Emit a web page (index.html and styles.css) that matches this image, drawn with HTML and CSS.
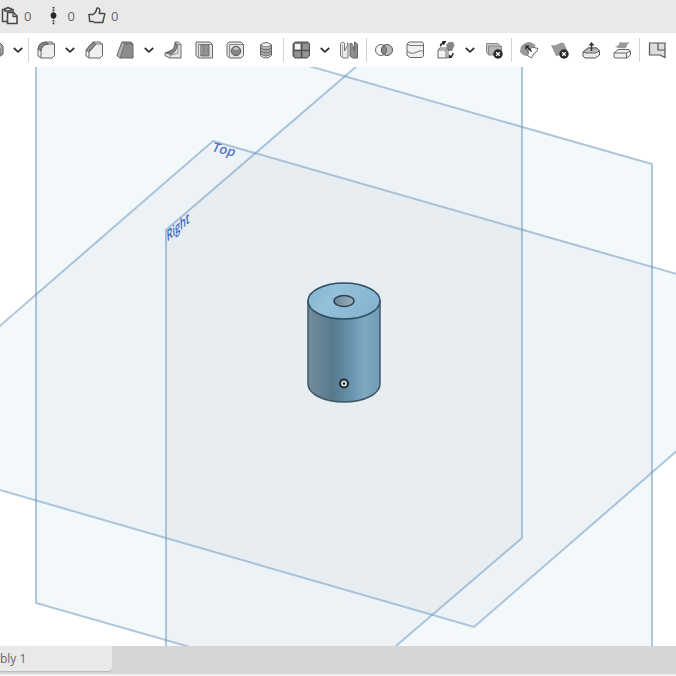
FILE: index.html
```html
<!DOCTYPE html>
<html lang="en">
<head>
<meta charset="utf-8">
<meta name="viewport" content="width=device-width, initial-scale=1">
<title>Part Studio</title>
<link rel="stylesheet" href="styles.css">
</head>
<body>
<svg class="defs" aria-hidden="true">
  <symbol id="chev" viewBox="0 0 10 8"><path d="M.8 2L5 5.800 9.200 2" fill="none" stroke="#303030" stroke-width="1.700"/></symbol>
  <symbol id="remove" viewBox="0 0 10 10"><circle cx="5" cy="5" r="4.700" fill="#292929"/><path d="M3.200 3.200l3.600 3.600M6.800 3.200L3.200 6.800" stroke="#fff" stroke-width="1.300"/></symbol>
</svg>
<header class="stats">
  <span class="stat"><svg class="icon" viewBox="0 0 20 20" role="img" aria-label="Copies"><path d="M7 15.500H2.500v-12H5M11 3.500h2V7M5 5V2.500h1.700a1.400 1.400 0 0 1 2.600 0H11V5z" fill="none" stroke="#4a4a4a" stroke-width="1.500"/><path d="M7.500 6.500h6L17 10v7.500H7.500z" fill="#ededed" stroke="#4a4a4a" stroke-width="1.600"/><path d="M13 6.500V10.500h4" fill="none" stroke="#4a4a4a" stroke-width="1.300"/></svg>0</span>
  <span class="stat"><svg class="icon" viewBox="0 0 20 20" role="img" aria-label="Versions"><path d="M10.500 1v17.500" stroke="#333" stroke-width="1.800" stroke-dasharray="1.600 1"/><circle cx="10.500" cy="9.500" r="2.900" fill="#292929"/></svg>0</span>
  <span class="stat"><svg class="icon" viewBox="0 0 20 20" role="img" aria-label="Likes"><path d="M2 8.500h4.300c2-1.500 3.400-3.400 3.500-6.200 1.900-.7 3.100.5 3 2.300l-.6 2.900h4.800c.9 0 1 1.200.5 1.700l-1.800 7.300H7.500l-1.400-1H2.700z" fill="none" stroke="#4a4a4a" stroke-width="1.500" stroke-linejoin="round"/></svg>0</span>
</header>
<nav class="toolbar" aria-label="Features">
  <button class="tool tool-cut" aria-label="Thicken"><svg class="icon" viewBox="0 0 20 20"><path d="M9 5l7-2 3 3v8l-4 3H8z" fill="#aaa" stroke="#555"/><path d="M9 8h7v8" fill="#ddd" stroke="#666"/></svg></button>
  <button class="more" aria-label="More solids"><svg><use href="#chev"/></svg></button>
  <i class="rule"></i>
  <button class="tool" aria-label="Fillet"><svg class="icon" viewBox="0 0 20 20"><path d="M2 9q1-7 9-7h5l2.500 2v11.500L16 18H5l-3-2z" fill="#eee" stroke="#666"/><path d="M2 9q1-7 8-7l2.500 2Q6 4 5 11z" fill="#888" stroke="#555" stroke-width=".8"/><path d="M5 18v-7q0-7 8-7h5.500" fill="none" stroke="#666"/></svg></button>
  <button class="more" aria-label="More fillets"><svg><use href="#chev"/></svg></button>
  <button class="tool" aria-label="Chamfer"><svg class="icon" viewBox="0 0 20 20"><path d="M2 10l7-8h7l2.500 2v11.500L16 18H5l-3-2z" fill="#eee" stroke="#666"/><path d="M2 10l7-8 3 2-7 8z" fill="#909090" stroke="#555" stroke-width=".8"/><path d="M5 18v-6l7-8h6.500" fill="none" stroke="#666"/></svg></button>
  <button class="tool" aria-label="Draft"><svg class="icon" viewBox="0 0 20 20"><path d="M7 2h9l2 2v14H5l-3-2.500z" fill="#8c8c8c" stroke="#666"/><path d="M7 2L2 15.500 5 18 9.500 4z" fill="#b5b5b5" stroke="#666" stroke-width=".8"/><path d="M9.500 4H18" stroke="#666" stroke-width=".8"/></svg></button>
  <button class="more" aria-label="More drafts"><svg><use href="#chev"/></svg></button>
  <button class="tool" aria-label="Rib"><svg class="icon" viewBox="0 0 20 20"><path d="M12 2h3.500l2.500 2.500V18H6.500L2 15.500V13l10-4z" fill="#e6e6e6" stroke="#666"/><path d="M12.500 3l2 2q-1 7-7 9.500L3 13q8-2 9.500-10z" fill="#858585" stroke="#555" stroke-width=".8"/><path d="M12 2l3 2.500V13l-8 2.500V18M15 4.500h3" fill="none" stroke="#777" stroke-width=".8"/></svg></button>
  <button class="tool" aria-label="Shell"><svg class="icon" viewBox="0 0 20 20"><path d="M2 2h14l2.500 2.500V18H4.500L2 15.500z" fill="#e3e3e3" stroke="#666"/><path d="M7 4.500h8V16H7z" fill="#919191" stroke="#666" stroke-width=".8"/><path d="M7 4.500l2 1.500v7.500L7 16z" fill="#bbb" stroke="#666" stroke-width=".8"/><path d="M4.500 18V4.500H18" fill="none" stroke="#777" stroke-width=".8"/></svg></button>
  <button class="tool" aria-label="Hole"><svg class="icon" viewBox="0 0 20 20"><path d="M2 4l2-2h12l2.500 2.500v11L16 18H4.500L2 15.500z" fill="#e7e7e7" stroke="#666"/><path d="M4.500 18V4.500h14" fill="none" stroke="#888"/><circle cx="11" cy="11" r="4.700" fill="#858585" stroke="#555"/><path d="M8 9q3-4 6 0-3 2-6 0" fill="#c5c5c5"/></svg></button>
  <button class="tool" aria-label="Thread"><svg class="icon" viewBox="0 0 20 20"><path d="M4.500 5v10.500q5.500 5 11 0V5q-5.500-5-11 0z" fill="#eee" stroke="#666"/><path d="M5 6q5 4 10 0v8q-5 4-10 0z" fill="#aaa"/><path d="M4.500 5q5.500 4 11 0M5 8q5 4 10 0M5 11q5 4 10 0M5 14q5 4 10 0" fill="none" stroke="#666"/></svg></button>
  <i class="rule"></i>
  <button class="tool" aria-label="Pattern"><svg class="icon" viewBox="0 0 20 20"><path d="M2 4l2-2h13l1.500 2v12L16 18H4l-2-2z" fill="#777" stroke="#555"/><path d="M4 4h5.500v5.500H4z" fill="#f3f3f3"/><path d="M12 4h5.500v5.500H12zM4 11.500h5.500V17H4zM12 11.500h5.500V17H12z" fill="#939393"/><path d="M10.500 2v16M2 10.500h16.500" stroke="#4d4d4d"/></svg></button>
  <button class="more" aria-label="More patterns"><svg><use href="#chev"/></svg></button>
  <button class="tool" aria-label="Mirror"><svg class="icon" viewBox="0 0 20 20"><path d="M1.500 4l2-2 2 1v8l3-6V3H9v15H4l-2.500-2z" fill="#ececec" stroke="#777"/><path d="M11 3.500h2l2.500 7V2l3 2v14h-5L11 16z" fill="#8c8c8c" stroke="#666"/><path d="M3.500 5v13M13 4v14" fill="none" stroke="#999" stroke-width=".8"/></svg></button>
  <i class="rule"></i>
  <button class="tool" aria-label="Boolean"><svg class="icon" viewBox="0 0 20 20"><circle cx="7" cy="10" r="5.500" fill="#f4f4f4" stroke="#666"/><circle cx="13" cy="10" r="5.500" fill="#bbb" stroke="#555"/><path d="M10 5.400a5.500 5.500 0 0 1 0 9.200 5.500 5.500 0 0 1 0-9.200z" fill="#888" stroke="#555"/></svg></button>
  <button class="tool" aria-label="Split"><svg class="icon" viewBox="0 0 20 20"><path d="M2 4l2-2h13l1.500 2v12L17 17.500H5L2 15z" fill="#f0f0f0" stroke="#666"/><path d="M2 4l3 1.500h13M2 11l3 2q4 1 7-1t6.500-1" fill="none" stroke="#777"/></svg></button>
  <button class="tool" aria-label="Transform"><svg class="icon" viewBox="0 0 20 20"><path d="M10 5l3-3h4l1.500 3-2.500 6h-4z" fill="#858585"/><path d="M2 10l2-2h7l1 1v8l-1 1H2z" fill="#f2f2f2" stroke="#666"/><path d="M2 10h8v8M10 10l2-2" fill="none" stroke="#777"/><path d="M4.500 6.500q0-3 3-3.500M17 13q0 3-3 4" fill="none" stroke="#333" stroke-width="1.500"/><path d="M6 1h4.500L7.500 5.500zM12.500 18.500l.5-4 3.500 3z" fill="#222"/></svg></button>
  <button class="more" aria-label="More transforms"><svg><use href="#chev"/></svg></button>
  <button class="tool" aria-label="Delete part"><svg class="icon" viewBox="0 0 20 20"><path d="M2.500 3.500h11.500l2 2V14H4l-1.500-1.500z" fill="#c8c8c8" stroke="#888"/><path d="M4.500 6h13v9h-13z" fill="#b5b5b5" stroke="#888"/><use href="#remove" x="9" y="9" width="10" height="10"/></svg></button>
  <i class="rule"></i>
  <button class="tool" aria-label="Modify fillet"><svg class="icon" viewBox="0 0 20 20"><path d="M1 12Q1 4 9 2q5 0 8 4l-4 2-5 8q-4 0-7-4z" fill="#999"/><path d="M8.500 10q3 1 4.500-3l6 1.500q-1 4-4 5l-2.500 4.500-4-2.500q2-2 0-5.500z" fill="#fff" stroke="#666"/><path d="M7.500 6l5 5.500M7 9.500V6h3.500" fill="none" stroke="#222" stroke-width="1.200"/></svg></button>
  <button class="tool" aria-label="Delete face"><svg class="icon" viewBox="0 0 20 20"><path d="M1 5q4 1 7-1t6-1l3 7-5 5-6 1z" fill="#9a9a9a"/><use href="#remove" x="9" y="9" width="10" height="10"/></svg></button>
  <button class="tool" aria-label="Move face"><svg class="icon" viewBox="0 0 20 20"><path d="M2 12l5-4h9l2.500 3v4l-4 3H4l-2-2z" fill="#e8e8e8" stroke="#555"/><path d="M2 12l5-4h9l2.500 3-4 2H5z" fill="#bbb" stroke="#666"/><path d="M10.500 11V4" stroke="#333" stroke-width="1.500"/><path d="M7.500 5.500h6L10.500 2z" fill="#333"/></svg></button>
  <button class="tool" aria-label="Replace face"><svg class="icon" viewBox="0 0 20 20"><path d="M3 7q4-1 5-5 5 1 10 0-3 2-4 6-6 1-11-1z" fill="#999"/><path d="M2 13l4-3.500h11l1.500 2v3.500L15 18H3l-1-1z" fill="#f0f0f0" stroke="#666"/><path d="M2 13h12.500v5M14.500 13l4-2" fill="none" stroke="#666"/></svg></button>
  <i class="rule"></i>
  <button class="tool" aria-label="Sheet metal"><svg class="icon" viewBox="0 0 20 20"><path d="M2.500 3h15.500v14.500l-5-2.500H2.500z" fill="#ddd" stroke="#555" stroke-width="1.200"/><path d="M11 3v7h7" fill="none" stroke="#555" stroke-width="1.200"/></svg></button>
</nav>
<main class="viewport">
  <svg class="scene" viewBox="0 67 676 579" preserveAspectRatio="xMidYMid slice" role="img" aria-label="Cylinder with reference planes">
    <defs>
      <clipPath id="clip-front"><path d="M36-12L652 164V779L36 603z"/></clipPath>
      <clipPath id="clip-right"><path d="M166 230L522-76V538L166 843z"/></clipPath>
      <linearGradient id="side"><stop offset="0" stop-color="#718c9c"/><stop offset=".25" stop-color="#617f91"/><stop offset=".34" stop-color="#56798d"/><stop offset=".6" stop-color="#6794af"/><stop offset=".78" stop-color="#7fa8c1"/><stop offset="1" stop-color="#709bb5"/></linearGradient>
      <linearGradient id="cap" x2="1" y2=".4"><stop offset="0" stop-color="#81b1cc"/><stop offset=".4" stop-color="#94c1da"/><stop offset="1" stop-color="#87b5d1"/></linearGradient>
      <linearGradient id="bore"><stop offset="0" stop-color="#6c8796"/><stop offset="1" stop-color="#9ab2c0"/></linearGradient>
    </defs>
    <g fill="#f3f8fb">
      <path d="M36-12L652 164V779L36 603z"/>
      <path d="M166 230L522-76V538L166 843z"/>
      <path d="M213 141L830 318 474 627-142 449z"/>
    </g>
    <g fill="#edf2f6">
      <path clip-path="url(#clip-front)" d="M166 230L522-76V538L166 843z"/>
      <path clip-path="url(#clip-front)" d="M213 141L830 318 474 627-142 449z"/>
      <path clip-path="url(#clip-right)" d="M213 141L830 318 474 627-142 449z"/>
    </g>
    <g clip-path="url(#clip-front)"><path clip-path="url(#clip-right)" d="M213 141L830 318 474 627-142 449z" fill="#e8edf2"/></g>
    <g class="edges">
      <path d="M36-12L652 164V779L36 603z"/>
      <path d="M166 230L522-76V538L166 843z"/>
      <path d="M213 141L830 318 474 627-142 449z"/>
    </g>
    <text class="plane-name" transform="translate(211 151) rotate(14) skewX(-10)">Top</text>
    <text class="plane-name plane-side" transform="translate(167 242) rotate(-41) skewX(-38)">Right</text>
    <path d="M308 301v83a36 18 0 0 0 72 0v-83z" fill="url(#side)" stroke="#3f5969" stroke-width="1.500"/>
    <ellipse cx="344" cy="301" rx="36" ry="18" fill="url(#cap)" stroke="#2f4f62" stroke-width="1.500"/>
    <ellipse cx="344" cy="301" rx="10" ry="5.500" fill="url(#bore)" stroke="#2d4350" stroke-width="1.500"/>
    <circle cx="344" cy="383.500" r="4" fill="#dce0e2" stroke="#20282d" stroke-width="2"/>
    <circle cx="344" cy="383.500" r="1.300" fill="#20282d"/>
  </svg>
</main>
<footer class="tabs"><button class="tab">bly 1</button></footer>
</body>
</html>
```
FILE: styles.css
```css
* { box-sizing: border-box; }
body {
  margin: 0;
  height: 100vh;
  display: flex;
  flex-direction: column;
  overflow: hidden;
  background: #fff;
  font-family: "Open Sans", "Noto Sans", sans-serif;
}
button { border: 0; padding: 0; background: none; font: inherit; }
.defs { position: absolute; width: 0; height: 0; }
.icon { display: block; flex: none; width: 20px; height: 20px; }
.stats {
  flex: none;
  display: flex;
  gap: 12px;
  height: 33px;
  padding-bottom: 2px;
  background: #e9e9e9;
}
.stat {
  display: flex;
  align-items: center;
  gap: 4px;
  color: #666;
  font-size: 13px;
  line-height: 20px;
}
.toolbar {
  flex: none;
  display: flex;
  align-items: center;
  height: 34px;
  overflow: hidden;
  background: #fff;
}
.tool { flex: none; display: flex; justify-content: center; width: 31px; }
.tool-cut { margin-left: -22px; }
.more { flex: none; display: flex; justify-content: center; width: 17px; }
.more svg { width: 10px; height: 8px; }
.rule {
  flex: none;
  width: 4px;
  height: 24px;
  background: linear-gradient(#d2d2d2, #d2d2d2) center / 1px 100% no-repeat;
}
.viewport { flex: 1; min-height: 0; }
.scene { display: block; width: 100%; height: 100%; }
.edges { fill: none; stroke: #6592bb; stroke-opacity: .5; stroke-width: 2; }
.plane-name { fill: #5272bb; font-size: 13px; font-weight: 600; }
.plane-side { fill: #4568b8; font-size: 12px; }
.tabs {
  flex: none;
  display: flex;
  height: 30px;
  padding-bottom: 2px;
  background: linear-gradient(#d6d6d6, #d6d6d6) top / 100% 28px no-repeat #f0f0f0;
}
.tab {
  width: 112px;
  height: 25px;
  border-radius: 0 0 4px 0;
  background: #e9e9e9;
  box-shadow: 0 1px 1px #bbb;
  color: #666;
  font-size: 12px;
  text-align: left;
}
```
